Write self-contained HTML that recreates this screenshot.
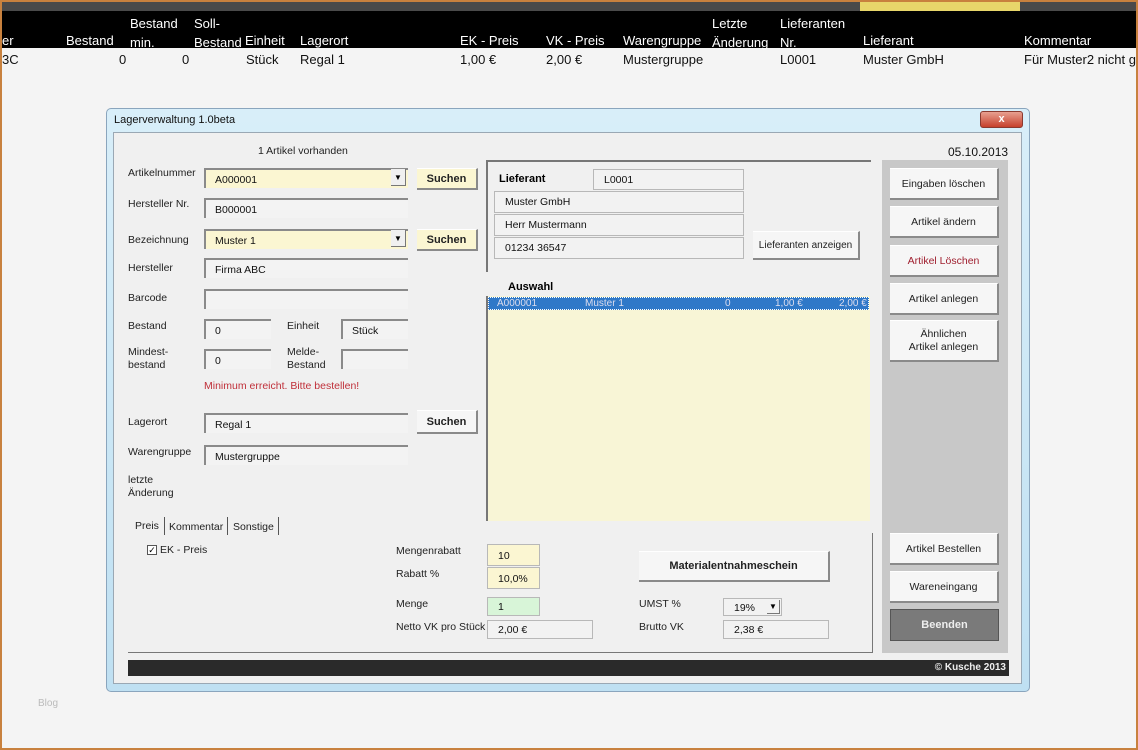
<!DOCTYPE html>
<html><head><meta charset="utf-8"><style>
*{box-sizing:border-box;margin:0;padding:0}
body{width:1138px;height:750px;overflow:hidden;background:#f4f4f4;font-family:"Liberation Sans",sans-serif;position:relative}
.a{position:absolute;white-space:nowrap}
.hd{color:#fff;font-size:13px}
.dt{color:#111;font-size:13px}
.l{font-size:10.5px;color:#222;line-height:13px}
.f{position:absolute;height:20px;border-top:2px solid #8a8a8a;border-left:2px solid #8a8a8a;background:#f3f3f3;font-size:10.5px;padding:4px 0 0 9px;color:#111}
.y{background:#fbf6d2}
.bt{position:absolute;background:#f6f6f6;border-right:2px solid #8a8a8a;border-bottom:2px solid #8a8a8a;border-top:1px solid #fff;font-size:10.5px;text-align:center;color:#222}
.s{background:#fbf6d2;font-weight:bold;font-size:11px}
.bx{position:absolute;border:1px solid #b8b8b8;background:#f2f2f2;font-size:10.5px;padding:4px 0 0 10px;color:#111}
</style></head><body>
<div class="a" style="left:0;top:0;width:1138px;height:750px;border:2px solid #c8813e"></div>
<div class="a" style="left:2px;top:2px;width:1134px;height:9px;background:#4a4a4a"></div>
<div class="a" style="left:860px;top:2px;width:160px;height:9px;background:#e8d66a"></div>
<div class="a" style="left:2px;top:11px;width:1134px;height:37px;background:#000"></div>
<div class="a hd" style="left:2px;top:33px">er</div>
<div class="a hd" style="left:66px;top:33px">Bestand</div>
<div class="a hd" style="left:130px;top:14px;line-height:19px">Bestand<br>min.</div>
<div class="a hd" style="left:194px;top:14px;line-height:19px">Soll-<br>Bestand</div>
<div class="a hd" style="left:245px;top:33px">Einheit</div>
<div class="a hd" style="left:300px;top:33px">Lagerort</div>
<div class="a hd" style="left:460px;top:33px">EK - Preis</div>
<div class="a hd" style="left:546px;top:33px">VK - Preis</div>
<div class="a hd" style="left:623px;top:33px">Warengruppe</div>
<div class="a hd" style="left:712px;top:14px;line-height:19px">Letzte<br>Änderung</div>
<div class="a hd" style="left:780px;top:14px;line-height:19px">Lieferanten<br>Nr.</div>
<div class="a hd" style="left:863px;top:33px">Lieferant</div>
<div class="a hd" style="left:1024px;top:33px">Kommentar</div>
<div class="a dt" style="left:2px;top:52px">3C</div>
<div class="a dt" style="left:119px;top:52px">0</div>
<div class="a dt" style="left:182px;top:52px">0</div>
<div class="a dt" style="left:246px;top:52px">Stück</div>
<div class="a dt" style="left:300px;top:52px">Regal 1</div>
<div class="a dt" style="left:460px;top:52px">1,00 €</div>
<div class="a dt" style="left:546px;top:52px">2,00 €</div>
<div class="a dt" style="left:623px;top:52px">Mustergruppe</div>
<div class="a dt" style="left:780px;top:52px">L0001</div>
<div class="a dt" style="left:863px;top:52px">Muster GmbH</div>
<div class="a dt" style="left:1024px;top:52px">Für Muster2 nicht g</div>
<div class="a" style="left:38px;top:698px;font-size:10px;color:#bbb">Blog</div>

<div class="a" style="left:106px;top:108px;width:924px;height:584px;border:1px solid #8aa5bd;border-radius:5px;background:linear-gradient(#d8eef9,#bfe0f2);"></div>
<div class="a" style="left:114px;top:114px;font-size:11px;color:#111">Lagerverwaltung 1.0beta</div>
<div class="a" style="left:980px;top:111px;width:43px;height:17px;border-radius:3px;background:linear-gradient(#e8a090,#c6402c);border:1px solid #8a3a30;color:#fff;font-size:11px;font-weight:bold;text-align:center;line-height:15px">x</div>
<div class="a" style="left:113px;top:132px;width:909px;height:552px;background:#f0f0f0;border:1px solid #9aa8b4"></div>

<div class="a l" style="left:258px;top:145px">1 Artikel vorhanden</div>
<div class="a" style="left:948px;top:145px;font-size:12px;color:#111">05.10.2013</div>

<div class="a l" style="left:128px;top:167px">Artikelnummer</div>
<div class="f y" style="left:204px;top:168px;width:204px">A000001</div>
<div class="a" style="left:391px;top:169px;width:15px;height:17px;background:#f0f0f0;border-right:1px solid #777;border-bottom:1px solid #777;font-size:8px;text-align:center;line-height:17px">▼</div>
<div class="bt s" style="left:417px;top:168px;width:61px;height:22px;line-height:20px">Suchen</div>
<div class="a l" style="left:128px;top:198px">Hersteller Nr.</div>
<div class="f" style="left:204px;top:198px;width:204px">B000001</div>
<div class="a l" style="left:128px;top:234px">Bezeichnung</div>
<div class="f y" style="left:204px;top:229px;width:204px">Muster 1</div>
<div class="a" style="left:391px;top:230px;width:15px;height:17px;background:#f0f0f0;border-right:1px solid #777;border-bottom:1px solid #777;font-size:8px;text-align:center;line-height:17px">▼</div>
<div class="bt s" style="left:417px;top:229px;width:61px;height:22px;line-height:20px">Suchen</div>
<div class="a l" style="left:128px;top:262px">Hersteller</div>
<div class="f" style="left:204px;top:258px;width:204px">Firma ABC</div>
<div class="a l" style="left:128px;top:292px">Barcode</div>
<div class="f" style="left:204px;top:289px;width:204px"></div>
<div class="a l" style="left:128px;top:320px">Bestand</div>
<div class="f" style="left:204px;top:319px;width:67px">0</div>
<div class="a l" style="left:287px;top:320px">Einheit</div>
<div class="f" style="left:341px;top:319px;width:67px">Stück</div>
<div class="a l" style="left:128px;top:346px">Mindest-<br>bestand</div>
<div class="f" style="left:204px;top:349px;width:67px">0</div>
<div class="a l" style="left:287px;top:346px">Melde-<br>Bestand</div>
<div class="f" style="left:341px;top:349px;width:67px"></div>
<div class="a l" style="left:204px;top:380px;color:#c0303a">Minimum erreicht. Bitte bestellen!</div>
<div class="a l" style="left:128px;top:416px">Lagerort</div>
<div class="f" style="left:204px;top:413px;width:204px">Regal 1</div>
<div class="bt s" style="left:417px;top:410px;width:61px;height:24px;line-height:22px;background:#f6f6f6">Suchen</div>
<div class="a l" style="left:128px;top:446px">Warengruppe</div>
<div class="f" style="left:204px;top:445px;width:204px">Mustergruppe</div>
<div class="a l" style="left:128px;top:474px">letzte<br>Änderung</div>

<div class="a" style="left:486px;top:160px;width:385px;height:112px;border-top:2px solid #777;border-left:2px solid #777"></div>
<div class="a" style="left:499px;top:173px;font-size:11px;font-weight:bold">Lieferant</div>
<div class="bx" style="left:593px;top:169px;width:151px;height:21px">L0001</div>
<div class="bx" style="left:494px;top:191px;width:250px;height:22px">Muster GmbH</div>
<div class="bx" style="left:494px;top:214px;width:250px;height:22px">Herr Mustermann</div>
<div class="bx" style="left:494px;top:237px;width:250px;height:22px">01234 36547</div>
<div class="bt" style="left:753px;top:231px;width:107px;height:29px;line-height:27px;font-size:10px">Lieferanten anzeigen</div>
<div class="a" style="left:508px;top:281px;font-size:11px;font-weight:bold">Auswahl</div>
<div class="a" style="left:486px;top:296px;width:384px;height:225px;background:#f8f5d6;border-left:2px solid #777"></div>
<div class="a" style="left:488px;top:297px;width:381px;height:13px;background:#2f78c8;border:1px dotted #fff;color:#dde;font-size:10px;line-height:11px">
<span class="a" style="left:8px">A000001</span><span class="a" style="left:96px">Muster 1</span><span class="a" style="left:236px">0</span><span class="a" style="left:286px">1,00 €</span><span class="a" style="left:350px">2,00 €</span></div>

<div class="a" style="left:882px;top:160px;width:126px;height:493px;background:#c8c8c8"></div>
<div class="bt" style="left:890px;top:168px;width:109px;height:32px;line-height:30px">Eingaben löschen</div>
<div class="bt" style="left:890px;top:206px;width:109px;height:32px;line-height:30px">Artikel ändern</div>
<div class="bt" style="left:890px;top:245px;width:109px;height:32px;line-height:30px;color:#a02030">Artikel Löschen</div>
<div class="bt" style="left:890px;top:283px;width:109px;height:32px;line-height:30px">Artikel anlegen</div>
<div class="bt" style="left:890px;top:320px;width:109px;height:42px;padding-top:7px;line-height:13px">Ähnlichen<br>Artikel anlegen</div>
<div class="bt" style="left:890px;top:533px;width:109px;height:32px;line-height:30px">Artikel Bestellen</div>
<div class="bt" style="left:890px;top:571px;width:109px;height:32px;line-height:30px">Wareneingang</div>
<div class="a" style="left:890px;top:609px;width:109px;height:32px;line-height:30px;background:#7a7a7a;border:1px solid #555;color:#eee;font-size:11px;font-weight:bold;text-align:center">Beenden</div>

<div class="a l" style="left:135px;top:520px">Preis</div>
<div class="a" style="left:164px;top:517px;width:1px;height:18px;background:#555"></div>
<div class="a l" style="left:169px;top:521px">Kommentar</div>
<div class="a" style="left:227px;top:517px;width:1px;height:18px;background:#555"></div>
<div class="a l" style="left:233px;top:521px">Sonstige</div>
<div class="a" style="left:278px;top:517px;width:1px;height:18px;background:#555"></div>
<div class="a" style="left:872px;top:533px;width:1px;height:120px;background:#777"></div>
<div class="a" style="left:128px;top:652px;width:745px;height:1px;background:#777"></div>
<div class="a" style="left:147px;top:545px;width:10px;height:10px;border:1px solid #555;background:#fff;font-size:9px;line-height:8px;text-align:center">✓</div>
<div class="a l" style="left:160px;top:544px">EK - Preis</div>

<div class="a l" style="left:396px;top:545px">Mengenrabatt</div>
<div class="bx" style="left:487px;top:544px;width:53px;height:22px;background:#fbf6d2;padding-top:5px">10</div>
<div class="a l" style="left:396px;top:568px">Rabatt %</div>
<div class="bx" style="left:487px;top:567px;width:53px;height:22px;background:#fbf6d2;padding-top:5px">10,0%</div>
<div class="a l" style="left:396px;top:598px">Menge</div>
<div class="bx" style="left:487px;top:597px;width:53px;height:19px;background:#d8f5d8;padding-top:3px">1</div>
<div class="a l" style="left:396px;top:621px">Netto VK pro Stück</div>
<div class="bx" style="left:487px;top:620px;width:106px;height:19px;padding-top:3px">2,00 €</div>
<div class="bt" style="left:639px;top:551px;width:191px;height:31px;line-height:29px;font-weight:bold;font-size:11px">Materialentnahmeschein</div>
<div class="a l" style="left:639px;top:598px">UMST %</div>
<div class="bx" style="left:723px;top:598px;width:59px;height:18px;padding-top:3px">19%</div>
<div class="a" style="left:767px;top:600px;width:13px;height:14px;font-size:8px;border-right:1px solid #777;border-bottom:1px solid #777;text-align:center;line-height:14px">▼</div>
<div class="a l" style="left:639px;top:621px">Brutto VK</div>
<div class="bx" style="left:723px;top:620px;width:106px;height:19px;padding-top:3px">2,38 €</div>

<div class="a" style="left:128px;top:660px;width:881px;height:16px;background:#2a2a2a;color:#eee;font-size:10px;font-weight:bold;text-align:right;padding-right:3px;line-height:15px">© Kusche 2013</div>
</body></html>
